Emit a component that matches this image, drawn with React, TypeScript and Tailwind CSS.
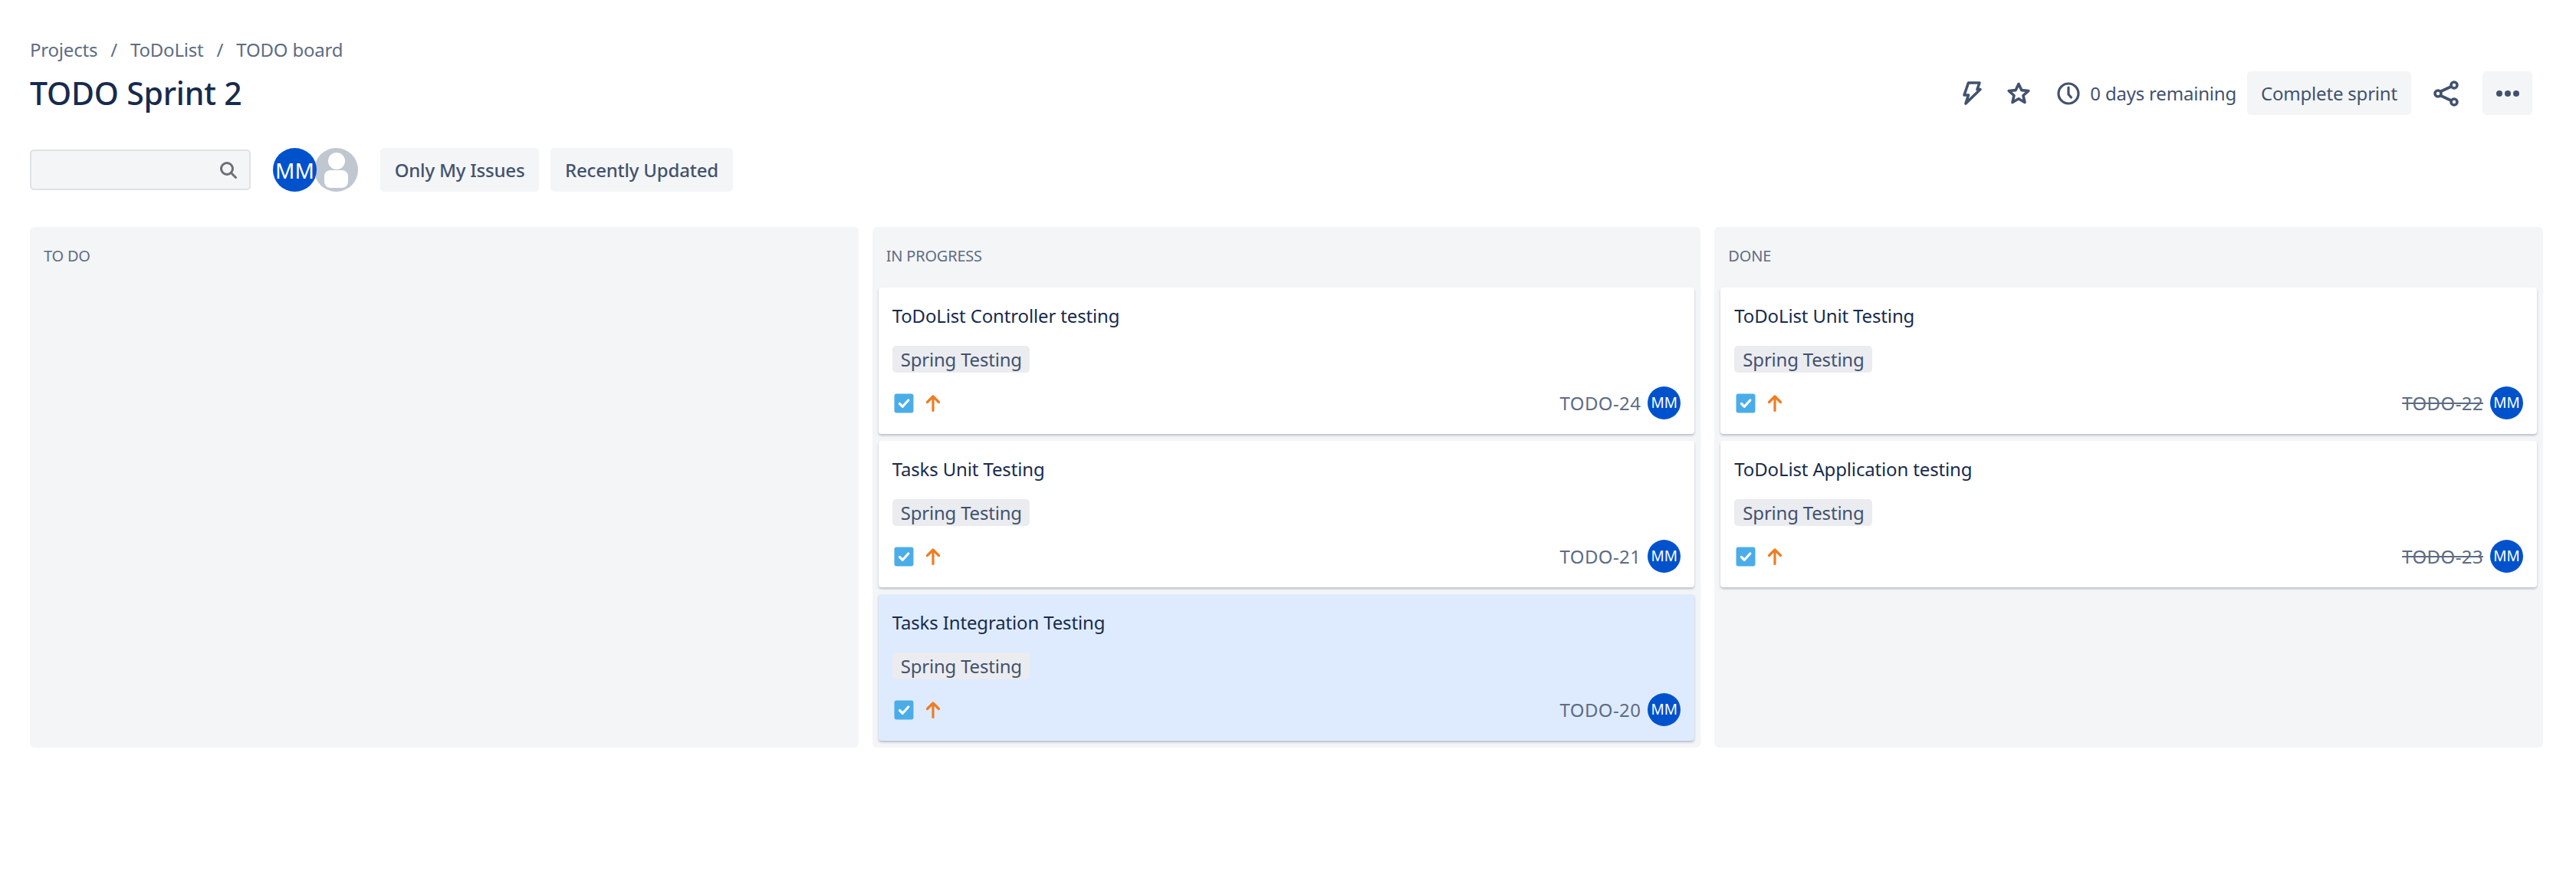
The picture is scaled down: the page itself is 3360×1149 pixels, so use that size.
import React from "react";

const font = "font-['Noto_Sans',sans-serif]";

function Bolt() {
  return (
    <svg width="25" height="31" viewBox="0 0 25 31" fill="none" stroke="#42526e" strokeWidth="3.6" strokeLinejoin="round" strokeLinecap="round">
      <path d="M7.5 2H22L19 10.5H23L4 29L7.5 18H2Z" />
    </svg>
  );
}

function Star() {
  return (
    <svg width="32" height="32" viewBox="0 0 32 32" fill="none" stroke="#42526e" strokeWidth="3.6" strokeLinejoin="round">
      <path d="M16 3.5l3.8 8.1 9 .9-6.800 6 2 9-8-4.700-8 4.700 2-9-6.800-6 9-.9z" />
    </svg>
  );
}

function Clock() {
  return (
    <svg width="32" height="32" viewBox="0 0 32 32" fill="none" stroke="#42526e" strokeWidth="3.2" strokeLinecap="round">
      <circle cx="16" cy="16" r="13" />
      <path d="M16 8v9l3.500 4" />
    </svg>
  );
}

function Share() {
  return (
    <svg width="36" height="36" viewBox="0 0 36 36" fill="none" stroke="#42526e" strokeWidth="3.6">
      <path d="M10 15.500L25 8.500M10 20.500l15 7" />
      <circle cx="7" cy="18" r="4" />
      <circle cx="28" cy="7" r="4" />
      <circle cx="28" cy="29" r="4" />
    </svg>
  );
}

function Avatar({ small }: { small?: boolean }) {
  return (
    <div
      className={
        small
          ? "w-[43px] h-[43px] rounded-full bg-[#0052cc] text-white text-[19px] flex items-center justify-center shrink-0"
          : "relative z-10 w-[57px] h-[57px] rounded-full bg-[#0052cc] text-white text-[28px] flex items-center justify-center shrink-0"
      }
    >
      MM
    </div>
  );
}

function GhostAvatar() {
  return (
    <svg width="57" height="57" viewBox="0 0 57 57" className="shrink-0 -ml-[3px]">
      <circle cx="28.500" cy="28.500" r="28.500" fill="#c1c7d0" />
      <circle cx="29" cy="17" r="11" fill="#ffffff" />
      <rect x="13" y="29" width="31" height="23" rx="8" fill="#ffffff" />
    </svg>
  );
}

function IssueCard({ title, issueKey, done, selected }: { title: string; issueKey: string; done?: boolean; selected?: boolean }) {
  return (
    <div
      className={
        selected
          ? "h-[191px] rounded-[4px] bg-[#deebff] shadow-[0_2px_3px_rgba(9,30,66,0.25)] pt-[24px] px-[18px] flex flex-col"
          : "h-[191px] rounded-[4px] bg-white shadow-[0_2px_3px_rgba(9,30,66,0.25)] pt-[24px] px-[18px] flex flex-col"
      }
    >
      <div className="text-[24px] leading-[26px] text-[#172b4d] h-[26px] tracking-[-0.15px]">{title}</div>
      <div className="mt-[26px] self-start h-[35px] pl-[11px] pr-[10px] rounded-[5px] bg-[#ebecf0] text-[#42526e] text-[24px] leading-[35px] tracking-[-0.2px]">
        Spring Testing
      </div>
      <div className="mt-[18px] flex items-center">
        <svg width="26" height="26" viewBox="0 0 26 26" className="ml-[2px] shrink-0">
          <rect x="0.500" y="0.500" width="25" height="25" rx="3" fill="#4bade8" />
          <path d="M7.500 13.500l3.800 3.800 7.500-8.300" fill="none" stroke="#ffffff" strokeWidth="3.200" strokeLinecap="round" strokeLinejoin="round" />
        </svg>
        <svg width="20" height="24" viewBox="0 0 20 24" className="ml-[15px] shrink-0" fill="none" stroke="#ed7d24" strokeWidth="3.200" strokeLinecap="round" strokeLinejoin="round">
          <path d="M10 21.500V3M2.500 10.500L10 3l7.500 7.500" />
        </svg>
        <div className="ml-auto flex items-center gap-[9px]">
          <span className={done ? "text-[24px] text-[#5e6c84] line-through tracking-[0.4px]" : "text-[24px] text-[#5e6c84] tracking-[0.4px]"}>{issueKey}</span>
          <Avatar small />
        </div>
      </div>
    </div>
  );
}

function Column({ label, children }: { label: string; children?: React.ReactNode }) {
  return (
    <div className="flex-1 rounded-[6px] bg-[#f4f5f7] px-[8px] pt-[24px] flex flex-col">
      <div className="h-[28px] pl-[10px] text-[20px] leading-[28px] text-[#5e6c84] uppercase tracking-[-0.2px] mb-[27px]">{label}</div>
      <div className="flex flex-col gap-[9px]">{children}</div>
    </div>
  );
}

export default function App() {
  return (
    <div className={`${font} w-[3360px] h-[1149px] bg-white pl-[39px] pr-[43px] pt-[50px]`}>
      <div className="h-[30px] text-[24px] leading-[30px] text-[#5e6c84] flex gap-[17px] tracking-[-0.2px]">
        <span>Projects</span>
        <span>/</span>
        <span>ToDoList</span>
        <span>/</span>
        <span>TODO board</span>
      </div>
      <div className="flex items-center justify-between h-[57px] mt-[13px] pr-[14px]">
        <div className="text-[41px] font-medium text-[#172b4d] tracking-[-0.2px]">TODO Sprint 2</div>
        <div className="flex items-center text-[#42526e]">
          <Bolt />
          <div className="ml-[32px]"><Star /></div>
          <div className="ml-[33px]"><Clock /></div>
          <span className="ml-[12px] text-[24px] tracking-[-0.2px]">0 days remaining</span>
          <div className="ml-[14px] h-[57px] w-[214px] rounded-[5px] bg-[#f4f5f7] text-[24px] flex items-center justify-center tracking-[-0.2px]">Complete sprint</div>
          <div className="ml-[28px]"><Share /></div>
          <div className="ml-[29px] h-[57px] w-[65px] rounded-[5px] bg-[#f4f5f7] flex items-center justify-center gap-[3px]">
            <span className="w-[8px] h-[8px] rounded-full bg-[#42526e]" />
            <span className="w-[8px] h-[8px] rounded-full bg-[#42526e]" />
            <span className="w-[8px] h-[8px] rounded-full bg-[#42526e]" />
          </div>
        </div>
      </div>
      <div className="flex items-center h-[57px] mt-[43px]">
        <div className="w-[288px] h-[53px] rounded-[5px] bg-[#f4f5f7] border-2 border-[#dfe1e6] flex items-center justify-end pr-[15px]">
          <svg width="24" height="24" viewBox="0 0 24 24" fill="none" stroke="#6b6f76" strokeWidth="3" strokeLinecap="round">
            <circle cx="10" cy="10" r="7.500" />
            <path d="M15.500 15.500l6 6" />
          </svg>
        </div>
        <div className="ml-[29px] flex items-center">
          <Avatar />
          <GhostAvatar />
        </div>
        <div className="ml-[29px] h-[57px] w-[207px] rounded-[5px] bg-[#f4f5f7] text-[24px] font-medium text-[#42526e] flex items-center justify-center tracking-[-0.2px]">Only My Issues</div>
        <div className="ml-[15px] h-[57px] w-[238px] rounded-[5px] bg-[#f4f5f7] text-[24px] font-medium text-[#42526e] flex items-center justify-center tracking-[-0.2px]">Recently Updated</div>
      </div>
      <div className="flex gap-[18px] h-[679px] mt-[46px]">
        <Column label="To Do" />
        <Column label="In Progress">
          <IssueCard title="ToDoList Controller testing" issueKey="TODO-24" />
          <IssueCard title="Tasks Unit Testing" issueKey="TODO-21" />
          <IssueCard title="Tasks Integration Testing" issueKey="TODO-20" selected />
        </Column>
        <Column label="Done">
          <IssueCard title="ToDoList Unit Testing" issueKey="TODO-22" done />
          <IssueCard title="ToDoList Application testing" issueKey="TODO-23" done />
        </Column>
      </div>
    </div>
  );
}
